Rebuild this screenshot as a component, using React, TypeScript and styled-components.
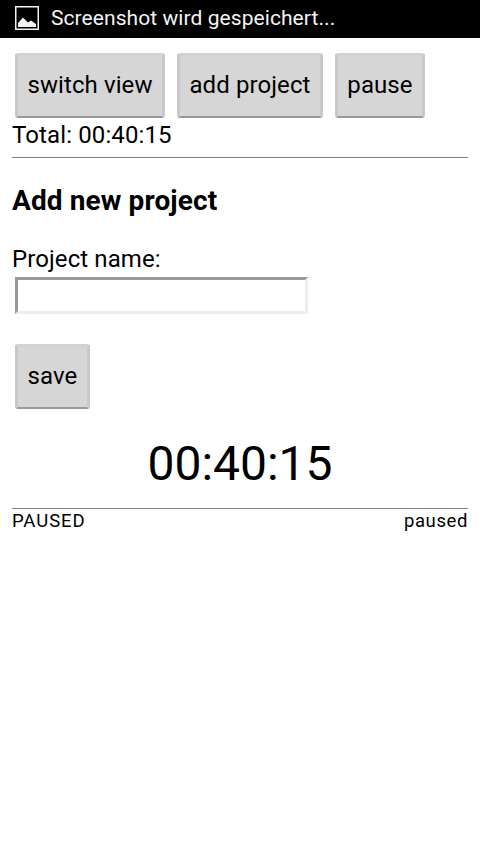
import React from "react";
import styled, { createGlobalStyle } from "styled-components";

const GlobalStyle = createGlobalStyle`
  * { box-sizing: border-box; }
  body { margin: 0; background: #fff; color: #000; font-family: Roboto, sans-serif; font-size: 24px; }
`;
const StatusBar = styled.header`
  display: flex;
  align-items: center;
  gap: 12px;
  height: 38px;
  padding: 0 0 2px 15px;
  background: #000;
  color: #f3f3f3;
  font-size: 21px;
  line-height: 37px;
`;
const Text = styled.span<{ $spacing: number }>`
  letter-spacing: ${(p) => p.$spacing}px;
  white-space: nowrap;
`;
const Page = styled.main`
  display: flex;
  flex-direction: column;
  padding: 15px 12px 0;
`;
const Toolbar = styled.nav`
  display: flex;
  gap: 12px;
  padding-left: 3px;
`;
const Button = styled.button<{ $width: number }>`
  width: ${(p) => p.$width}px;
  height: 65px;
  padding: 0 0 2px 0;
  border: 3px solid;
  border-color: #d2d2d2 #c8c8c8 #999 #c8c8c8;
  border-bottom-width: 2px;
  border-radius: 3px;
  background: #d6d6d6;
  color: #000;
  font: 24px Roboto, sans-serif;
  letter-spacing: 0.1px;
  white-space: nowrap;
`;
const Total = styled.div`
  height: 40px;
  line-height: 34px;
  border-bottom: 1px solid #808080;
`;
const Title = styled.h1`
  margin: 26px 0 0;
  font-size: 28px;
  line-height: 34px;
  font-weight: 700;
`;
const Form = styled.form`
  display: flex;
  flex-direction: column;
  align-items: flex-start;
  margin-top: 24px;
`;
const Label = styled.label`
  line-height: 34px;
`;
const Input = styled.input`
  width: 293px;
  height: 37px;
  margin: 1px 3px 30px;
  border: 3px solid;
  border-color: #999 #ededed #ededed #999;
  background: #fff;
  font: 24px Roboto, sans-serif;
`;
const SaveRow = styled.div`
  padding-left: 3px;
`;
const Clock = styled.div`
  margin-top: 26px;
  height: 74px;
  line-height: 58px;
  font-size: 48px;
  text-align: center;
  border-bottom: 1px solid #808080;
`;
const Footer = styled.footer`
  display: flex;
  justify-content: space-between;
  font-size: 18.5px;
  line-height: 24px;
`;

export default function App() {
  return (
    <>
      <GlobalStyle />
      <StatusBar>
        <svg width="24" height="24" viewBox="0 0 24 24">
          <rect x="0.75" y="0.75" width="22.5" height="22.5" fill="none" stroke="#f3f3f3" strokeWidth="1.5" />
          <path d="M3 21v-4l5-5.5 5 5 3-2 5 3.500v3z" fill="#f3f3f3" />
        </svg>
        <Text $spacing={0.07}>Screenshot wird gespeichert...</Text>
      </StatusBar>
      <Page>
        <Toolbar>
          <Button $width={150}>switch view</Button>
          <Button $width={146}>add project</Button>
          <Button $width={90}>pause</Button>
        </Toolbar>
        <Total><Text $spacing={0.12}>Total: 00:40:15</Text></Total>
        <Title><Text $spacing={0.12}>Add new project</Text></Title>
        <Form onSubmit={(e) => e.preventDefault()}>
          <Label htmlFor="name"><Text $spacing={0.1}>Project name:</Text></Label>
          <Input id="name" />
          <SaveRow><Button $width={75}>save</Button></SaveRow>
        </Form>
        <Clock>00:40:15</Clock>
        <Footer>
          <Text $spacing={0.95}>PAUSED</Text>
          <Text $spacing={0.6}>paused</Text>
        </Footer>
      </Page>
    </>
  );
}
